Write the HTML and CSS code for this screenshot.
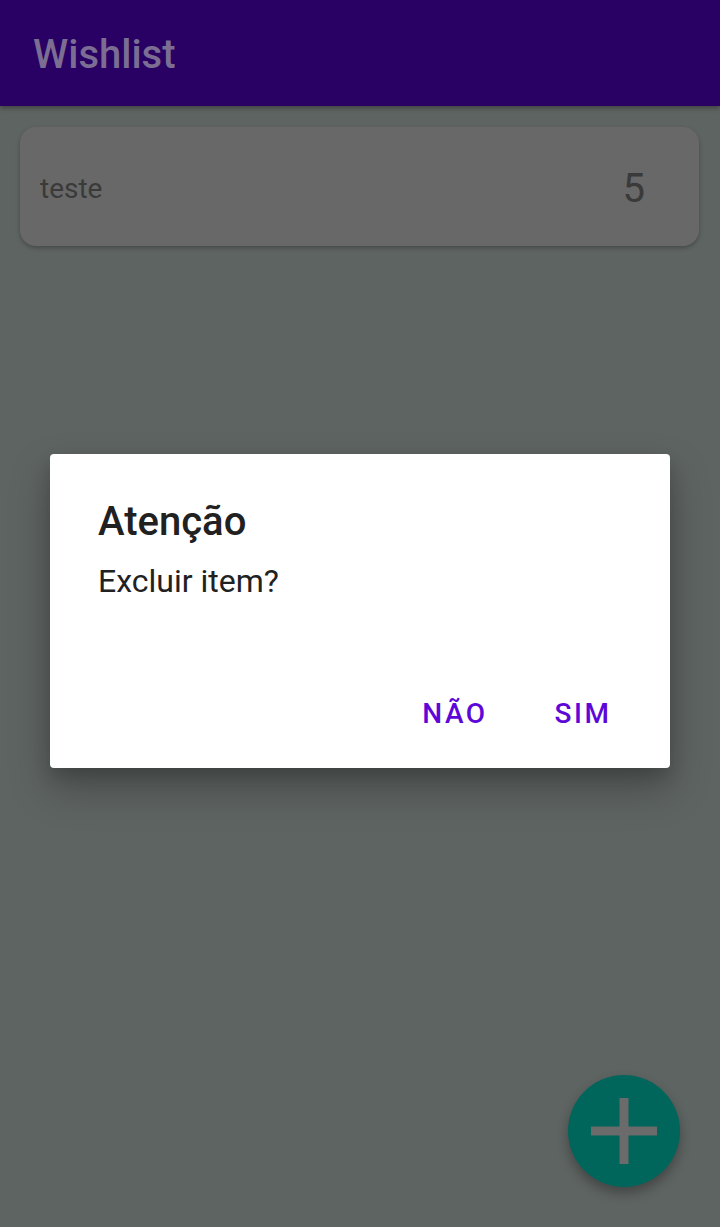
FILE: index.html
```html
<!DOCTYPE html>
<html lang="pt">
<head>
<meta charset="utf-8">
<title>Wishlist</title>
<link rel="stylesheet" href="styles.css">
</head>
<body>
<div class="screen">
  <header class="appbar"><h1 class="appbar-title">Wishlist</h1></header>
  <main class="list">
    <div class="card">
      <span class="card-name">teste</span>
      <span class="card-qty">5</span>
    </div>
  </main>
  <button class="fab" aria-label="Adicionar">
    <svg width="66" height="66" viewBox="0 0 66 66"><path d="M28.5 0h9v28.5H66v9H37.5V66h-9V37.5H0v-9h28.5z" fill="#6b6b6b"/></svg>
  </button>
  <div class="scrim">
    <div class="dialog">
      <h2 class="dialog-title">Atenção</h2>
      <p class="dialog-msg">Excluir item?</p>
      <div class="dialog-actions">
        <button class="dialog-btn">NÃO</button>
        <button class="dialog-btn">SIM</button>
      </div>
    </div>
  </div>
</div>
</body>
</html>
```
FILE: styles.css
```css
html, body {
  margin: 0;
  padding: 0;
}
body {
  font-family: Roboto, "Liberation Sans", sans-serif;
  background: #5e6462;
}
.screen {
  position: relative;
  width: 720px;
  height: 1227px;
  overflow: hidden;
  background: #5e6462;
}
.appbar {
  height: 106px;
  background: #290064;
  display: flex;
  align-items: center;
  padding-left: 33px;
  box-shadow: 0 2px 5px rgba(0,0,0,0.35);
  position: relative;
  z-index: 1;
}
.appbar-title {
  margin: 0;
  font-size: 40px;
  font-weight: 500;
  color: #7b6e92;
  line-height: 1;
  padding-top: 4px;
}
.list {
  padding: 21px 21px 0 20px;
}
.card {
  height: 119px;
  background: #686868;
  border-radius: 16px;
  box-shadow: 0 2px 4px rgba(0,0,0,0.25);
  display: flex;
  align-items: center;
  justify-content: space-between;
  padding: 0 54px 0 20px;
}
.card-name {
  font-size: 28px;
  color: #3a3a3a;
  padding-top: 4px;
}
.card-qty {
  font-size: 40px;
  color: #3a3a3a;
  padding-top: 4px;
}
.fab {
  position: absolute;
  left: 568px;
  top: 1075px;
  width: 112px;
  height: 112px;
  border-radius: 50%;
  border: none;
  background: #00655b;
  box-shadow: 0 6px 12px rgba(0,0,0,0.3);
  display: flex;
  align-items: center;
  justify-content: center;
  padding: 0;
}
.scrim {
  position: absolute;
  inset: 0;
  z-index: 2;
}
.dialog {
  position: absolute;
  left: 50px;
  top: 454px;
  width: 620px;
  height: 314px;
  box-sizing: border-box;
  background: #ffffff;
  border-radius: 4px;
  box-shadow: 0 20px 40px rgba(0,0,0,0.25), 0 8px 16px rgba(0,0,0,0.15);
  padding: 44px 23px 19px 48px;
  display: flex;
  flex-direction: column;
}
.dialog-title {
  margin: 0;
  font-size: 40px;
  font-weight: 500;
  color: #212121;
  line-height: 47px;
}
.dialog-msg {
  margin: 17px 0 0 0;
  font-size: 32px;
  color: #212121;
  line-height: 38px;
}
.dialog-actions {
  margin-top: auto;
  display: flex;
  justify-content: flex-end;
}
.dialog-btn {
  border: none;
  background: transparent;
  font-family: Roboto, "Liberation Sans", sans-serif;
  font-size: 28px;
  font-weight: 500;
  letter-spacing: 2.5px;
  color: #5e08d8;
  height: 72px;
  padding: 0 16px;
  min-width: 128px;
}
```
